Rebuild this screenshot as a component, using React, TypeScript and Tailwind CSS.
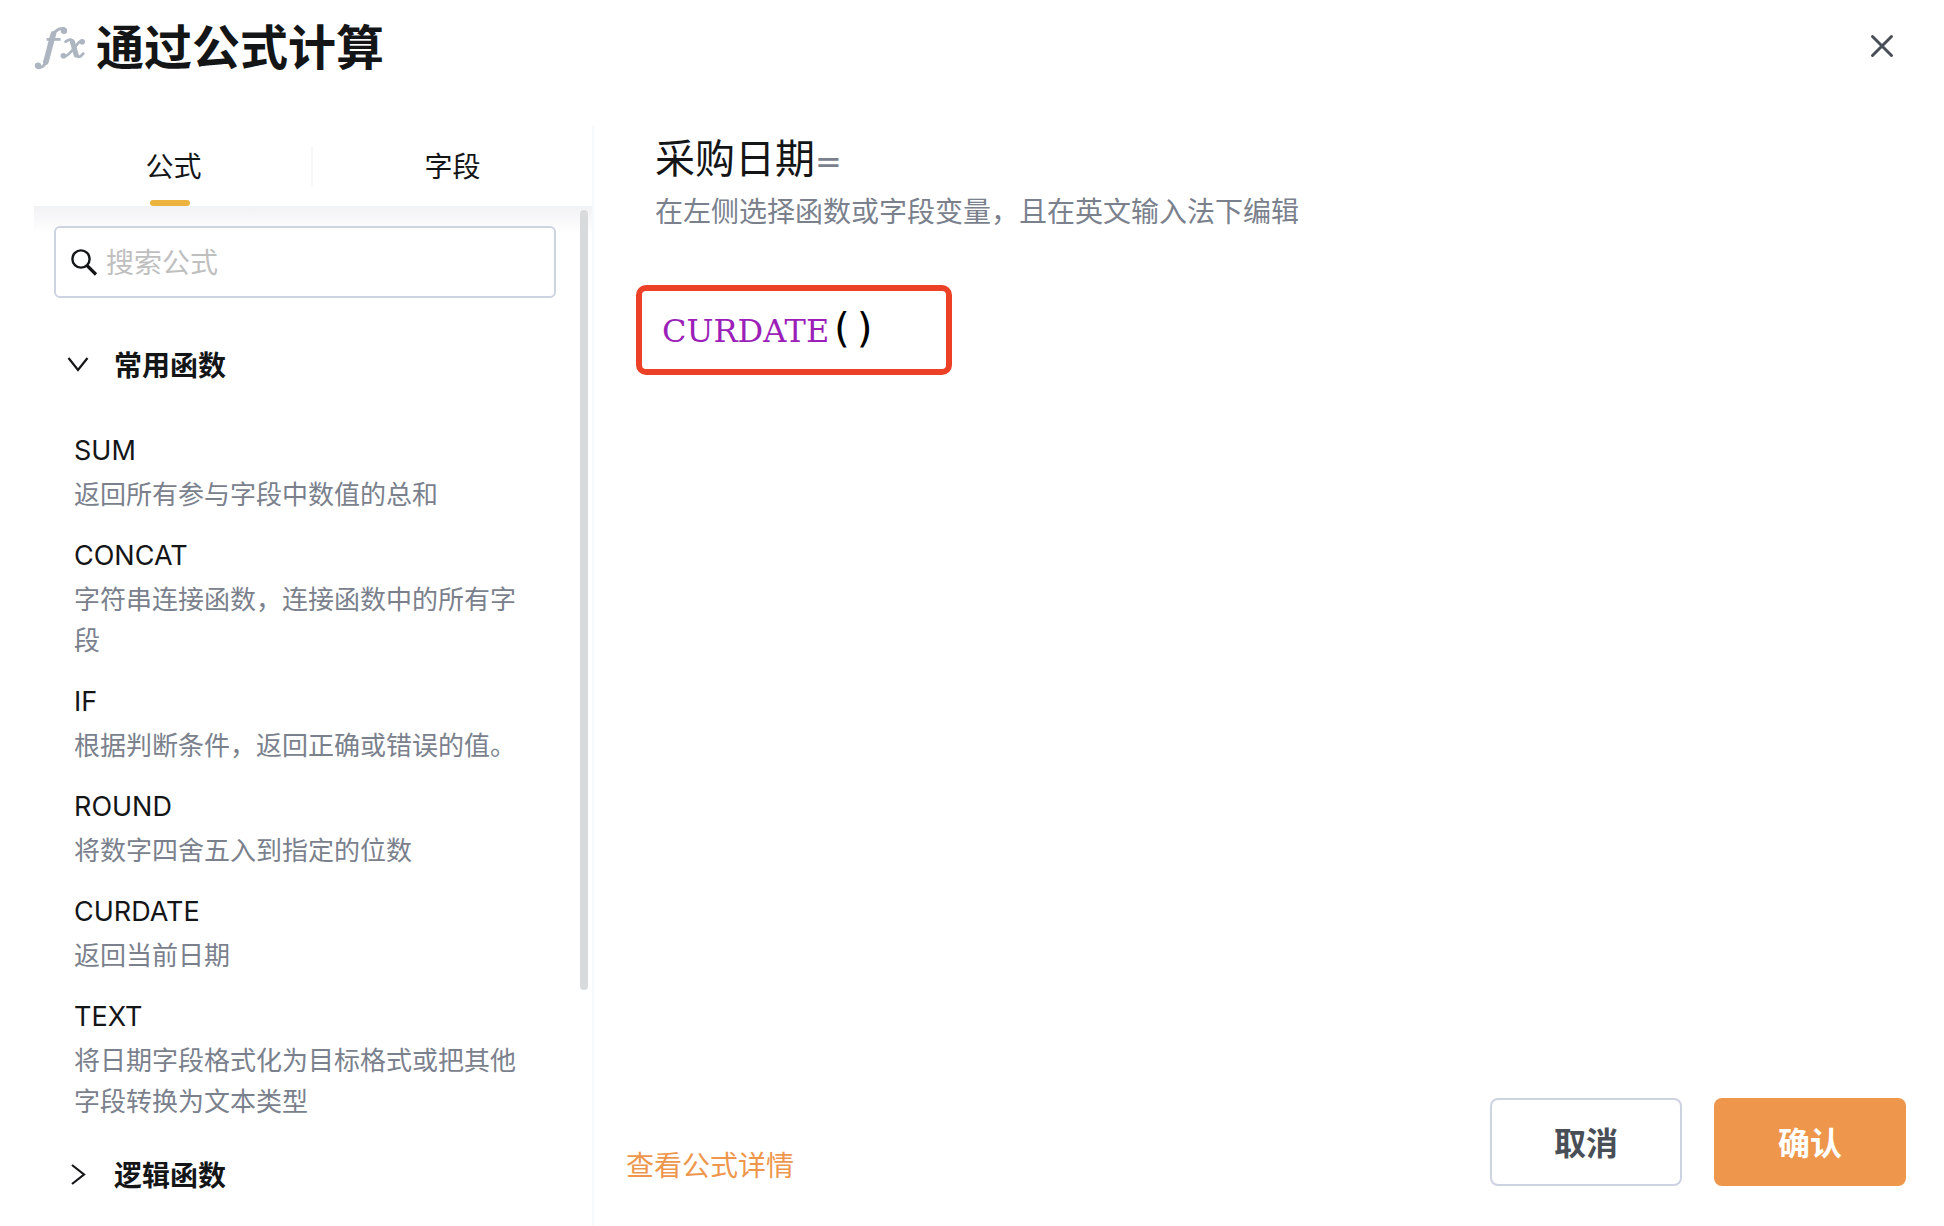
import { useState } from "react";

type FormulaItem = { name: string; desc: string };

const commonFunctions: FormulaItem[] = [
  { name: "SUM", desc: "返回所有参与字段中数值的总和" },
  { name: "CONCAT", desc: "字符串连接函数，连接函数中的所有字段" },
  { name: "IF", desc: "根据判断条件，返回正确或错误的值。" },
  { name: "ROUND", desc: "将数字四舍五入到指定的位数" },
  { name: "CURDATE", desc: "返回当前日期" },
  { name: "TEXT", desc: "将日期字段格式化为目标格式或把其他字段转换为文本类型" },
];

const tabs = ["公式", "字段"];

function FxIcon() {
  return (
    <svg className="mt-2 h-[44px] w-[52px] shrink-0" viewBox="0 0 52 44" fill="none" stroke="#adb5c1" strokeLinecap="round" aria-hidden="true">
      <circle cx="4" cy="39.6" r="3.2" fill="#adb5c1" stroke="none" />
      <circle cx="30" cy="4.8" r="3.2" fill="#adb5c1" stroke="none" />
      <path d="M3.8 41.6C8.8 42.6 11.8 38 13.4 31.5L18 13C19.7 6.2 22.8 1.8 29.8 2.6" strokeWidth="3" />
      <path d="M11.8 36C13.6 31 17.4 14 19.4 8" strokeWidth="5.6" />
      <path d="M12.6 13.4H26.6" strokeWidth="2.8" strokeLinecap="butt" />
      <path d="M31.6 15.6C36 12.6 38.2 12.8 39.4 16.8L41.6 26.2C42.8 31.6 45.4 32.4 49.2 27.6" strokeWidth="2.8" />
      <path d="M38.4 15.8L42.2 29" strokeWidth="5" />
      <path d="M47.8 14.8C42.6 15 37.6 30 29.8 30.6" strokeWidth="2.8" />
      <circle cx="48.2" cy="15.8" r="2.8" fill="#adb5c1" stroke="none" />
      <circle cx="29.4" cy="29.8" r="2.8" fill="#adb5c1" stroke="none" />
    </svg>
  );
}

function Chevron({ open }: { open: boolean }) {
  return (
    <svg className="size-6 shrink-0" viewBox="0 0 24 24" fill="none" stroke="#141517" strokeWidth="2.2" aria-hidden="true">
      {open ? <path d="M2.5 6L12 18L21.5 6" /> : <path d="M6 3L18 12.5L6 22" />}
    </svg>
  );
}

function Group({ title, items, defaultOpen }: { title: string; items: FormulaItem[]; defaultOpen: boolean }) {
  const [open, setOpen] = useState(defaultOpen);

  return (
    <section>
      <button
        type="button"
        aria-expanded={open}
        onClick={() => setOpen(!open)}
        className="flex h-[84px] w-full items-center gap-6 pl-8 text-left text-[28px] font-bold"
      >
        <Chevron open={open} />
        {title}
      </button>
      {open && (
        <ul className="flex flex-col gap-[22px] pt-6 pr-14 pb-3 pl-10">
          {items.map((item) => (
            <li key={item.name}>
              <h3 className="font-['Inter','Noto_Sans_CJK_SC',sans-serif] text-[27px] leading-[42px]">{item.name}</h3>
              <p className="text-[26px] leading-[41px] text-[#7a818d]">{item.desc}</p>
            </li>
          ))}
        </ul>
      )}
    </section>
  );
}

export default function App() {
  const [tab, setTab] = useState(tabs[0]);

  return (
    <div className="flex h-screen flex-col overflow-hidden bg-white font-['Noto_Sans_CJK_SC',sans-serif] text-[#141517]" lang="zh-CN">
      <header className="flex h-[126px] shrink-0 items-start justify-between pt-2 pr-11 pl-[34px]">
        <h1 className="flex h-[72px] items-center gap-[10px] text-[48px] leading-[72px] font-bold">
          <FxIcon />
          通过公式计算
        </h1>
        <button type="button" aria-label="关闭" className="flex h-[76px] w-9 items-center justify-center">
          <svg className="size-6" viewBox="0 0 24 24" fill="none" stroke="#494f57" strokeWidth="3" strokeLinecap="round">
            <path d="M2.5 2.5L21.5 21.5M21.5 2.5L2.5 21.5" />
          </svg>
        </button>
      </header>

      <main className="flex min-h-0 flex-1">
        <aside className="ml-[34px] flex w-[560px] shrink-0 flex-col border-r-2 border-[#f7f8f9]">
          <div role="tablist" className="flex h-20 shrink-0 items-center">
            {tabs.map((name, i) => (
              <button
                key={name}
                type="button"
                role="tab"
                aria-selected={tab === name}
                onClick={() => setTab(name)}
                className="relative h-full flex-1 pb-[2px] text-[28px]"
              >
                {name}
                {i > 0 && <span className="absolute top-5 -left-[2px] h-10 w-[2px] bg-[#f7f8f9]" />}
                {tab === name && <span className="absolute bottom-0 left-[116px] h-[6px] w-10 rounded-sm bg-[#ecb43f]" />}
              </button>
            ))}
          </div>

          <div className="flex min-h-0 flex-1 bg-linear-to-b from-[#f1f2f5] to-white to-[28px]">
            <div className="min-w-0 flex-1 overflow-hidden pt-5 pb-6">
              <label className="mr-6 ml-5 flex h-[72px] items-center gap-2 rounded-md border-2 border-[#cdd3e1] bg-white px-[14px]">
                <svg className="size-7 shrink-0" viewBox="0 0 28 28" fill="none" stroke="#141517" strokeWidth="2.4" aria-hidden="true">
                  <circle cx="11" cy="11" r="8.6" />
                  <path d="M17 17.5L26 26.5" strokeWidth="3.2" />
                </svg>
                <input
                  type="text"
                  aria-label="搜索公式"
                  placeholder="搜索公式"
                  className="min-w-0 flex-1 bg-transparent pb-[2px] text-[28px] outline-none placeholder:text-[#bfbfbf]"
                />
              </label>
              <div className="pt-6">
                <Group title="常用函数" items={commonFunctions} defaultOpen />
                <Group title="逻辑函数" items={[]} defaultOpen={false} />
              </div>
            </div>
            <div className="w-3 shrink-0 pt-1">
              <div className="h-[780px] w-2 rounded-full bg-[#d9dadc]" />
            </div>
          </div>
        </aside>

        <div className="flex min-w-0 flex-1 flex-col">
          <div className="flex-1 pr-10 pl-[42px]">
            <div className="pl-[19px]">
              <h2 className="h-[60px] text-[40px] leading-[60px]">
                采购日期<span className="font-['DejaVu_Sans',sans-serif] text-[32px] leading-none text-[#7a818d]">=</span>
              </h2>
              <p className="text-[28px] leading-[48px] text-[#7a818d]">在左侧选择函数或字段变量，且在英文输入法下编辑</p>
            </div>
            <div className="mt-[51px] flex h-[90px] w-[316px] items-center rounded-[10px] border-6 border-[#ec4027] pl-5">
              <code className="text-[40px] leading-[48px] text-black">
                <span className="font-['DejaVu_Serif',serif] text-[32px] text-[#9b1fb8]">CURDATE</span>
                <span className="font-['DejaVu_Sans_Mono',monospace] text-[40px]">()</span>
              </code>
            </div>
          </div>

          <footer className="flex shrink-0 items-end justify-between pr-[38px] pb-10 pl-8">
            <a href="#" className="text-[28px] leading-[44px] text-[#ee974c]">查看公式详情</a>
            <div className="flex gap-8">
              <button type="button" className="h-[88px] w-48 rounded-lg border-2 border-[#cdd3e1] pb-[2px] text-[32px] font-bold text-[#494f57]">取消</button>
              <button type="button" className="h-[88px] w-48 rounded-lg bg-[#ee974c] pb-[2px] text-[32px] font-bold text-white">确认</button>
            </div>
          </footer>
        </div>
      </main>
    </div>
  );
}
